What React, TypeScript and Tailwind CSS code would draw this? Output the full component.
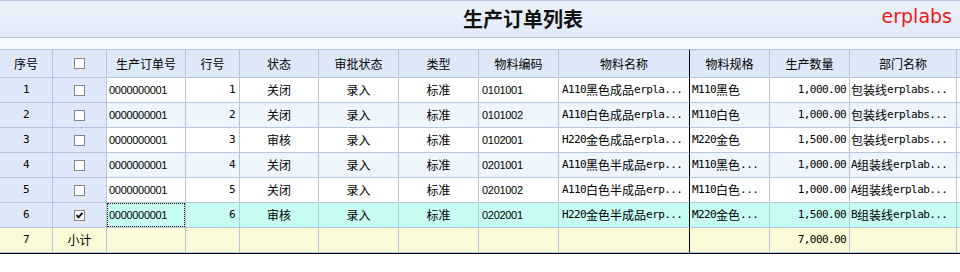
import React from "react";

type Row = {
  n: number;
  chk: boolean;
  no: string;
  line: number;
  st: string;
  ap: string;
  ty: string;
  code: string;
  name: string;
  spec: string;
  qty: string;
  dept: string;
};

const rows: Row[] = [
  { n: 1, chk: false, no: "0000000001", line: 1, st: "关闭", ap: "录入", ty: "标准", code: "0101001", name: "A110黑色成品erpla...", spec: "M110黑色", qty: "1,000.00", dept: "包装线erplabs..." },
  { n: 2, chk: false, no: "0000000001", line: 2, st: "关闭", ap: "录入", ty: "标准", code: "0101002", name: "A110白色成品erpla...", spec: "M110白色", qty: "1,000.00", dept: "包装线erplabs..." },
  { n: 3, chk: false, no: "0000000001", line: 3, st: "审核", ap: "录入", ty: "标准", code: "0102001", name: "H220金色成品erpla...", spec: "M220金色", qty: "1,500.00", dept: "包装线erplabs..." },
  { n: 4, chk: false, no: "0000000001", line: 4, st: "关闭", ap: "录入", ty: "标准", code: "0201001", name: "A110黑色半成品erp...", spec: "M110黑色...", qty: "1,000.00", dept: "A组装线erplab..." },
  { n: 5, chk: false, no: "0000000001", line: 5, st: "关闭", ap: "录入", ty: "标准", code: "0201002", name: "A110白色半成品erp...", spec: "M110白色...", qty: "1,000.00", dept: "A组装线erplab..." },
  { n: 6, chk: true, no: "0000000001", line: 6, st: "审核", ap: "录入", ty: "标准", code: "0202001", name: "H220金色半成品erp...", spec: "M220金色...", qty: "1,500.00", dept: "B组装线erplab..." },
];

function Mix({ t }: { t: string }) {
  const parts = t.split(/([\x00-\x7f]+)/).filter(Boolean);
  return (
    <>
      {parts.map((p, i) =>
        /^[\x00-\x7f]+$/.test(p) ? (
          <span key={i} className="font-['DejaVu_Sans_Mono',monospace] text-[11px] tracking-[-0.6px]">
            {p}
          </span>
        ) : (
          <span key={i}>{p}</span>
        )
      )}
    </>
  );
}

function Box({ checked }: { checked?: boolean }) {
  return (
    <div className="w-[11px] h-[11px] border border-[#858585] bg-white flex items-center justify-center">
      {checked && (
        <svg width="9" height="9" viewBox="0 0 9 9">
          <path d="M1.5 4.2 L3.5 6.4 L7.5 1.8" stroke="#000" strokeWidth="1.8" fill="none" />
        </svg>
      )}
    </div>
  );
}

const headers = ["序号", "", "生产订单号", "行号", "状态", "审批状态", "类型", "物料编码", "物料名称", "物料规格", "生产数量", "部门名称", ""];

const cell = "h-[25px] border-r border-b border-[#b3c6e0] flex items-center overflow-hidden whitespace-nowrap";

export default function App() {
  return (
    <div className="w-[960px] h-[272px] bg-white font-['Noto_Sans_CJK_SC',sans-serif] text-[12px] text-black overflow-hidden">
      <div className="h-[38px] border-t border-b border-[#b3c6e0] bg-gradient-to-b from-[#ebf2fb] to-[#e1ebf8] flex items-center justify-center relative">
        <div className="pl-[86px] text-[20px] font-bold leading-none text-[#111]">生产订单列表</div>
        <div className="absolute right-[8px] top-[6px] text-[19px] leading-none font-['DejaVu_Sans',sans-serif] text-[#f01818]">erplabs</div>
      </div>
      <div className="h-[11px] bg-[#f6f9fd]" />
      <div className="grid grid-cols-[53px_54px_79px_54px_79px_80px_80px_80px_131px_80px_80px_107px_3px] border-t border-[#b3c6e0]">
        {headers.map((h, i) => (
          <div
            key={"h" + i}
            className={`h-[28px] border-b border-[#b3c6e0] bg-[#dde9f9] flex items-center justify-center whitespace-nowrap ${i === 8 ? "border-r border-r-black" : i === 12 ? "" : "border-r"}`}
          >
            {i === 1 ? <Box /> : h}
          </div>
        ))}
        {rows.map((r, ri) => {
          const bg = r.n === 6 ? "bg-[#c7fcf3]" : ri % 2 === 1 ? "bg-[#eef5fd]" : "bg-white";
          return (
            <React.Fragment key={r.n}>
              <div className={`${cell} bg-[#dde9f9] justify-center`}>
                <Mix t={String(r.n)} />
              </div>
              <div className={`${cell} bg-[#dde9f9] justify-center`}>
                <Box checked={r.chk} />
              </div>
              <div className={`${cell} ${bg} relative pl-[2px] font-['Liberation_Sans',sans-serif] text-[11px] tracking-[-0.3px]`}>
                {r.n === 6 && <div className="absolute inset-0 border border-dotted border-[#3a0a0a]" />}
                {r.no}
              </div>
              <div className={`${cell} ${bg} justify-end pr-[4px]`}>
                <Mix t={String(r.line)} />
              </div>
              <div className={`${cell} ${bg} justify-center`}>{r.st}</div>
              <div className={`${cell} ${bg} justify-center`}>{r.ap}</div>
              <div className={`${cell} ${bg} justify-center`}>{r.ty}</div>
              <div className={`${cell} ${bg} pl-[3px] font-['Liberation_Sans',sans-serif] text-[11px] tracking-[-0.3px]`}>{r.code}</div>
              <div className={`${cell} ${bg} pl-[3px] border-r-black`}>
                <Mix t={r.name} />
              </div>
              <div className={`${cell} ${bg} pl-[2px]`}>
                <Mix t={r.spec} />
              </div>
              <div className={`${cell} ${bg} justify-end pr-[3px]`}>
                <Mix t={r.qty} />
              </div>
              <div className={`${cell} ${bg} pl-[1px]`}>
                <Mix t={r.dept} />
              </div>
              <div className={`h-[25px] border-b border-[#b3c6e0] ${bg}`} />
            </React.Fragment>
          );
        })}
        {/* subtotal */}
        <div className={`${cell} bg-[#fafad7] justify-center`}>
          <Mix t="7" />
        </div>
        <div className={`${cell} bg-[#fafad7] justify-center`}>小计</div>
        <div className={`${cell} bg-[#fafad7]`} />
        <div className={`${cell} bg-[#fafad7]`} />
        <div className={`${cell} bg-[#fafad7]`} />
        <div className={`${cell} bg-[#fafad7]`} />
        <div className={`${cell} bg-[#fafad7]`} />
        <div className={`${cell} bg-[#fafad7]`} />
        <div className={`${cell} bg-[#fafad7] border-r-black`} />
        <div className={`${cell} bg-[#fafad7]`} />
        <div className={`${cell} bg-[#fafad7] justify-end pr-[3px]`}>
          <Mix t="7,000.00" />
        </div>
        <div className={`${cell} bg-[#fafad7]`} />
        <div className="h-[25px] border-b border-[#b3c6e0] bg-[#fafad7]" />
      </div>
      <div className="h-[1px] bg-black" />
    </div>
  );
}
